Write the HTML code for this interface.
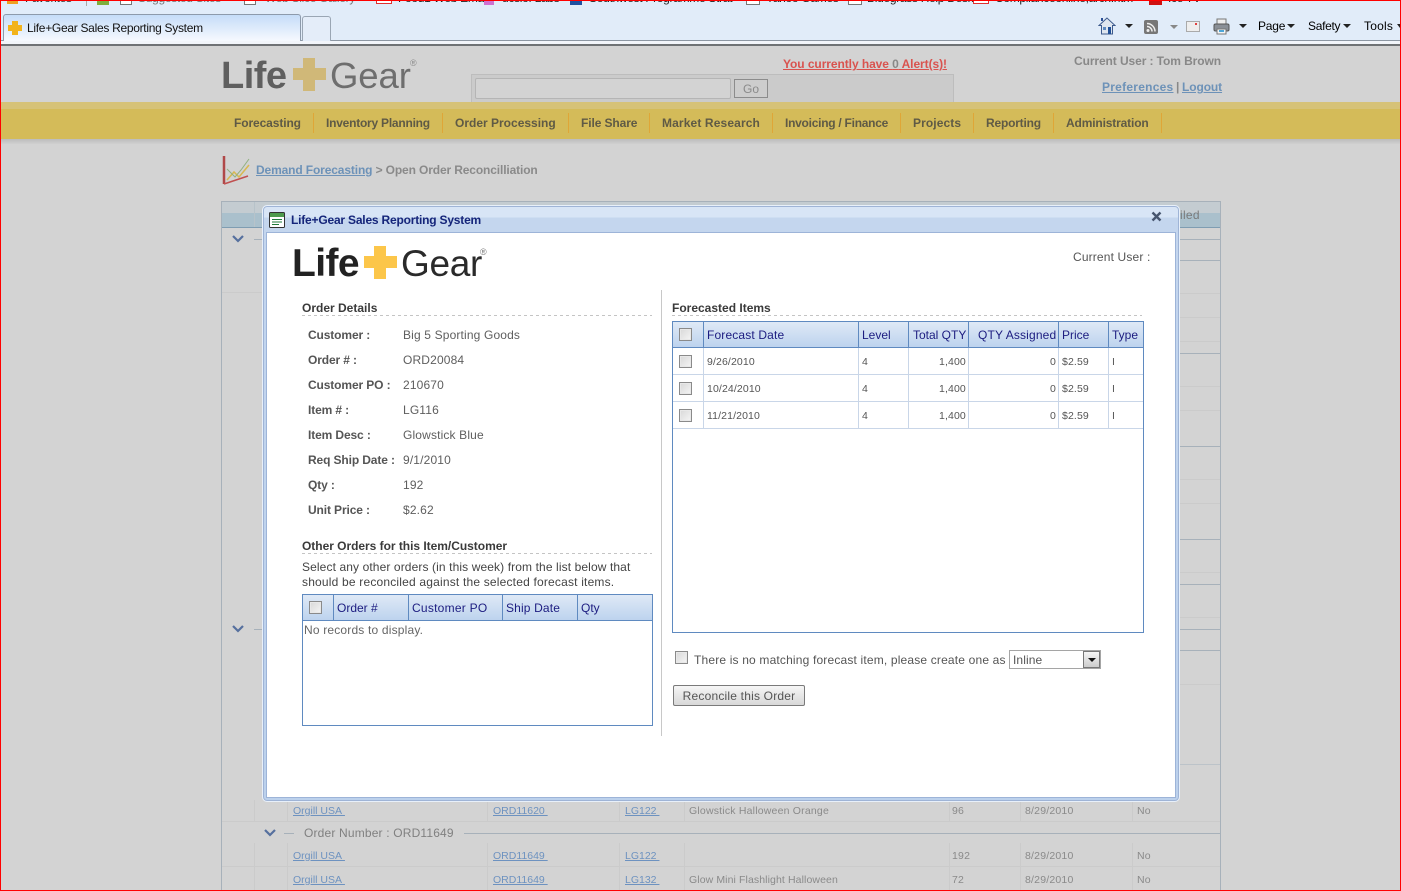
<!DOCTYPE html>
<html><head><meta charset="utf-8"><title>Life+Gear Sales Reporting System</title>
<style>
*{box-sizing:border-box}
html,body{margin:0;padding:0;width:1401px;height:891px;overflow:hidden;background:#d3d3d3}
body{position:relative;font:12px/14px "Liberation Sans",sans-serif;color:#666}
.a{position:absolute}
.t{position:absolute;white-space:nowrap;line-height:14px}
.b{font-weight:bold}
.u{text-decoration:underline}
.nav{position:absolute;top:116px;font-weight:bold;color:#5f5a45;white-space:nowrap;line-height:14px}
.sep{position:absolute;top:113px;width:1px;height:20px;background:#dfa637}
.bl{position:absolute;background:#a7b1ba}
.fl{position:absolute;background:#cbcbcb}
.lk{position:absolute;white-space:nowrap;line-height:14px;color:#6d92c0;font-size:10.5px;text-decoration:underline}
.bg{position:absolute;white-space:nowrap;line-height:14px;color:#8a8a8a;font-size:10.5px;letter-spacing:.2px}
.lab{position:absolute;left:308px;font-weight:bold;color:#555;white-space:nowrap;line-height:14px;letter-spacing:-.12px}
.val{position:absolute;left:403px;color:#5e5e5e;white-space:nowrap;line-height:14px;letter-spacing:.15px}
.h{position:absolute;font-weight:bold;color:#3a3a3a;white-space:nowrap;line-height:14px}
.dash{position:absolute;height:1px;background:repeating-linear-gradient(90deg,#c4c4c4 0 3px,transparent 3px 6px)}
.th{position:absolute;height:26px;background:linear-gradient(#dfe9f6,#bdd3ee);border-top:1px solid #5f8ac0;border-bottom:1px solid #5f8ac0}
.thd{position:absolute;width:1px;background:#5f8ac0}
.tht{position:absolute;color:#1c1c80;white-space:nowrap;line-height:14px;letter-spacing:.15px}
.td{position:absolute;color:#555;font-size:10.5px;white-space:nowrap;line-height:14px;letter-spacing:.12px}
.cb{position:absolute;width:13px;height:13px;border:1px solid #8a8a8a;background:linear-gradient(135deg,#d8d8d8,#f5f5f5);box-shadow:inset 0 0 0 1px #e8e8e8}
.rowl{position:absolute;left:673px;width:470px;height:1px;background:#c9d6e8}
.cold{position:absolute;width:1px;top:348px;height:81px;background:#c9d6e8}
.top{position:absolute;top:19px;color:#000;white-space:nowrap;line-height:14px;font-size:12px}
.fav{position:absolute;top:-9px;white-space:nowrap;line-height:14px;letter-spacing:-.3px}
</style></head><body>

<!-- browser chrome -->
<div class="a" style="left:0;top:0;width:1401px;height:46px;background:#e1ecf9"></div>
<div class="a" style="left:0;top:40px;width:1401px;height:1px;background:#8d97a3"></div>
<div class="a" style="left:0;top:41px;width:1401px;height:3px;background:#f2f5fa"></div>
<div class="a" style="left:0;top:44px;width:1401px;height:2px;background:#6f7275"></div>
<div class="fav" style="left:25px;color:#333">Favorites</div>
<div class="a" style="left:7px;top:0;width:11px;height:4px;background:#f0a020"></div>
<div class="a" style="left:86px;top:0;width:1px;height:6px;background:#a8a8a8"></div>
<div class="a" style="left:97px;top:0;width:12px;height:5px;background:#7fae3c"></div>
<div class="a" style="left:120px;top:0;width:12px;height:5px;background:#fff;border:1px solid #777"></div>
<div class="fav" style="left:138px;color:#777">Suggested Sites</div>
<div class="a" style="left:244px;top:0;width:12px;height:5px;background:#fff;border:1px solid #777"></div>
<div class="fav" style="left:265px;color:#777">Web Slice Gallery</div>
<div class="a" style="left:376px;top:0;width:16px;height:4px;background:#fff;border:1px solid #e03030"></div>
<div class="fav" style="left:398px;color:#222">Food1 Web Email</div>
<div class="a" style="left:484px;top:0;width:10px;height:5px;background:#d070d0"></div>
<div class="fav" style="left:502px;color:#222">ucsiof Labs</div>
<div class="a" style="left:570px;top:0;width:12px;height:5px;background:#2050a0"></div>
<div class="fav" style="left:589px;color:#222">Southwest Programme Strat</div>
<div class="a" style="left:746px;top:0;width:14px;height:5px;background:#fff;border:1px solid #777"></div>
<div class="fav" style="left:766px;color:#222">Yahoo Games</div>
<div class="a" style="left:848px;top:0;width:14px;height:5px;background:#fff;border:1px solid #777"></div>
<div class="fav" style="left:867px;color:#222">Bluegrass Help Desk</div>
<div class="a" style="left:973px;top:0;width:16px;height:4px;background:#fff;border:1px solid #e03030"></div>
<div class="fav" style="left:995px;color:#222">Complianceonline,arch.htm</div>
<div class="a" style="left:1149px;top:0;width:13px;height:5px;background:#d01010"></div>
<div class="fav" style="left:1168px;color:#222">Ice TV</div>

<!-- tabs -->
<div class="a" style="left:3px;top:14px;width:298px;height:27px;border:1px solid #8d9aab;border-bottom:0;border-radius:3px 3px 0 0;background:linear-gradient(#c5dcf8,#f6f9fe)"></div>
<svg class="a" style="left:8px;top:21px" width="14" height="14"><path d="M4 0h6v4h4v6h-4v4H4v-4H0V4h4z" fill="#f2b31c"/></svg>
<div class="t" style="left:27px;top:21px;color:#111;font-size:12px;letter-spacing:-.29px">Life+Gear Sales Reporting System</div>
<div class="a" style="left:302px;top:16px;width:29px;height:25px;border:1px solid #9aa6b4;border-bottom:0;border-radius:3px 3px 0 0;background:#e4edf9"></div>

<!-- toolbar right -->
<svg class="a" style="left:1098px;top:17px" width="18" height="18"><path d="M9 1 1 8.5h2.5V17h11V8.5H17z" fill="#dfe6ef" stroke="#3d5a8c"/><rect x="5" y="10" width="3" height="3" fill="#5f8ac0"/><rect x="10" y="10" width="3" height="7" fill="#1f4f96"/><path d="M3 1h2v3H3z" fill="#2b4f96"/></svg>
<div class="a" style="left:1125px;top:24px;border:4px solid transparent;border-top:4px solid #222"></div>
<div class="a" style="left:1144px;top:20px;width:14px;height:14px;background:#777;border-radius:2px"></div>
<svg class="a" style="left:1144px;top:20px" width="14" height="14"><circle cx="4" cy="10.500" r="1.500" fill="#eee"/><path d="M3 6.500a5 5 0 0 1 5 5M3 3.500a8 8 0 0 1 8 8" stroke="#eee" stroke-width="1.500" fill="none"/></svg>
<div class="a" style="left:1170px;top:25px;border:4px solid transparent;border-top:4px solid #888"></div>
<div class="a" style="left:1186px;top:21px;width:14px;height:11px;background:#eee;border:1px solid #aaa"></div>
<div class="a" style="left:1195px;top:23px;width:2px;height:2px;background:#e04040"></div>
<svg class="a" style="left:1213px;top:18px" width="17" height="17"><rect x="4" y="1" width="9" height="5" fill="#eee" stroke="#777"/><rect x="1" y="6" width="15" height="7" rx="1.500" fill="#8a8f96" stroke="#555"/><rect x="4" y="11" width="9" height="5" fill="#f4f4f4" stroke="#777"/><rect x="6" y="12" width="5" height="2" fill="#4da6d8"/></svg>
<div class="a" style="left:1239px;top:24px;border:4px solid transparent;border-top:4px solid #222"></div>
<div class="top" style="left:1258px;letter-spacing:-.2px">Page</div>
<div class="a" style="left:1287px;top:24px;border:4px solid transparent;border-top:4px solid #222"></div>
<div class="top" style="left:1308px;letter-spacing:-.3px">Safety</div>
<div class="a" style="left:1343px;top:24px;border:4px solid transparent;border-top:4px solid #222"></div>
<div class="top" style="left:1364px;letter-spacing:.2px">Tools</div>
<div class="a" style="left:1397px;top:24px;border:3px solid transparent;border-top:4px solid #222"></div>

<!-- page header -->
<div class="a" style="left:0;top:46px;width:1401px;height:845px;background:#d3d3d3"></div>
<div class="t b" style="left:221px;top:53px;font-size:38px;line-height:46px;color:#5f5f5f;letter-spacing:-.5px">Life</div>
<svg class="a" style="left:293px;top:58px" width="33" height="33"><path d="M10 0h12v10h11v12H22v11H10V22H0V10h10z" fill="#d0b878"/></svg>
<div class="t" style="left:330px;top:53px;font-size:36.5px;line-height:46px;color:#6e6e6e;letter-spacing:-.1px">Gear</div>
<div class="t" style="left:410px;top:59px;font-size:9px;line-height:9px;color:#8a8a8a">®</div>

<div class="t b u" style="left:783px;top:57px;color:#d9534f;letter-spacing:-.07px">You currently have <span style="color:#888">0</span> Alert(s)!</div>
<div class="t b" style="left:1074px;top:54px;color:#888;letter-spacing:-.09px">Current User : Tom Brown</div>
<div class="t b u" style="left:1102px;top:80px;color:#6d92b8;letter-spacing:.25px">Preferences</div>
<div class="t b" style="left:1176px;top:80px;color:#888">|</div>
<div class="t b u" style="left:1182px;top:80px;color:#6d92b8;letter-spacing:-.1px">Logout</div>

<div class="a" style="left:471px;top:74px;width:483px;height:30px;background:#cbcbcb;border:1px solid #bdbdbd;border-bottom:0"></div>
<div class="a" style="left:475px;top:78px;width:256px;height:21px;background:#d3d3d3;border:1px solid #b5b5b5;border-radius:2px"></div>
<div class="a" style="left:734px;top:79px;width:34px;height:19px;background:#cdcdcd;border:1px solid #8c8c8c;text-align:center;line-height:18px;color:#8a8a8a">Go</div>

<!-- nav bar -->
<div class="a" style="left:0;top:102px;width:1401px;height:7px;background:#d6c278"></div>
<div class="a" style="left:0;top:109px;width:1401px;height:30px;background:#d4bb59"></div>
<div class="a" style="left:0;top:139px;width:1401px;height:5px;background:linear-gradient(#bcbcbc,#d0d0d0)"></div>
<div class="nav" style="left:234px;letter-spacing:-.1px">Forecasting</div><div class="sep" style="left:313px"></div>
<div class="nav" style="left:326px;letter-spacing:-.23px">Inventory Planning</div><div class="sep" style="left:442px"></div>
<div class="nav" style="left:455px">Order Processing</div><div class="sep" style="left:568px"></div>
<div class="nav" style="left:581px;letter-spacing:-.1px">File Share</div><div class="sep" style="left:649px"></div>
<div class="nav" style="left:662px;letter-spacing:.13px">Market Research</div><div class="sep" style="left:772px"></div>
<div class="nav" style="left:785px;letter-spacing:-.26px">Invoicing / Finance</div><div class="sep" style="left:900px"></div>
<div class="nav" style="left:913px;letter-spacing:.1px">Projects</div><div class="sep" style="left:973px"></div>
<div class="nav" style="left:986px;letter-spacing:-.2px">Reporting</div><div class="sep" style="left:1053px"></div>
<div class="nav" style="left:1066px;letter-spacing:-.15px">Administration</div><div class="sep" style="left:1161px"></div>

<!-- breadcrumb -->
<svg class="a" style="left:222px;top:155px" width="30" height="30"><path d="M2 1v28" stroke="#b04848" stroke-width="2.500" fill="none"/><path d="M2 29 26 21" stroke="#c05050" stroke-width="1.500" fill="none"/><path d="M5 25l7-8 5 5 10-12" stroke="#d8b850" stroke-width="1.500" fill="none"/><path d="M5 14l8 8 6-7 8-11" stroke="#90b080" fill="none"/></svg>
<div class="t b" style="left:256px;top:163px;color:#8a8a8a;letter-spacing:-.13px"><span class="u" style="color:#6d92b8">Demand Forecasting</span> &gt; Open Order Reconcilliation</div>

<!-- background grid -->
<div class="a" style="left:221px;top:201px;width:1000px;height:690px;border:1px solid #a7b1ba;border-bottom:0"></div>
<div class="a" style="left:222px;top:202px;width:998px;height:11px;background:#c4ccd1"></div>
<div class="a" style="left:222px;top:213px;width:998px;height:14px;background:#aac0cc"></div>
<div class="a" style="left:222px;top:227px;width:998px;height:1px;background:#7f9db2"></div>
<div class="a" style="left:254px;top:202px;width:1px;height:25px;background:#b7c3ca"></div>
<div class="t" style="left:1180px;top:208px;color:#7a7a7a;letter-spacing:.3px">iled</div>
<svg class="a" style="left:232px;top:235px" width="12" height="8"><path d="M1 1l5 5 5-5" stroke="#56709e" stroke-width="2.200" fill="none"/></svg>
<svg class="a" style="left:232px;top:625px" width="12" height="8"><path d="M1 1l5 5 5-5" stroke="#56709e" stroke-width="2.200" fill="none"/></svg>
<div class="bl" style="left:254px;top:239px;width:966px;height:1px"></div>
<div class="bl" style="left:254px;top:629px;width:966px;height:1px"></div>
<div class="bl" style="left:1180px;top:260px;width:40px;height:1px"></div>
<div class="bl" style="left:1180px;top:353px;width:40px;height:1px"></div>
<div class="bl" style="left:1180px;top:446px;width:40px;height:1px"></div>
<div class="bl" style="left:1180px;top:539px;width:40px;height:1px"></div>
<div class="bl" style="left:1180px;top:584px;width:40px;height:1px"></div>
<div class="bl" style="left:1180px;top:650px;width:40px;height:1px"></div>
<div class="bl" style="left:1180px;top:764px;width:40px;height:1px;background:#bcc3c9"></div>
<div class="fl" style="left:222px;top:292px;width:40px;height:1px"></div>
<div class="fl" style="left:1180px;top:293px;width:40px;height:1px"></div>
<div class="fl" style="left:1180px;top:317px;width:40px;height:1px"></div>
<div class="fl" style="left:1180px;top:341px;width:40px;height:1px"></div>
<div class="fl" style="left:1180px;top:386px;width:40px;height:1px"></div>
<div class="fl" style="left:1180px;top:410px;width:40px;height:1px"></div>
<div class="fl" style="left:1180px;top:479px;width:40px;height:1px"></div>
<div class="fl" style="left:1180px;top:503px;width:40px;height:1px"></div>
<div class="fl" style="left:1180px;top:572px;width:40px;height:1px"></div>
<div class="fl" style="left:1180px;top:617px;width:40px;height:1px"></div>
<div class="fl" style="left:1180px;top:684px;width:40px;height:1px"></div>

<div class="fl" style="left:222px;top:821px;width:998px;height:1px"></div>
<div class="fl" style="left:222px;top:866px;width:998px;height:1px"></div>
<div class="fl" style="left:254px;top:800px;width:1px;height:21px"></div>
<div class="fl" style="left:287px;top:800px;width:1px;height:21px"></div>
<div class="fl" style="left:254px;top:843px;width:1px;height:48px"></div>
<div class="fl" style="left:287px;top:843px;width:1px;height:48px"></div>
<div class="fl" style="left:487px;top:800px;width:1px;height:21px"></div>
<div class="fl" style="left:487px;top:843px;width:1px;height:48px"></div>
<div class="fl" style="left:619px;top:800px;width:1px;height:21px"></div>
<div class="fl" style="left:619px;top:843px;width:1px;height:48px"></div>
<div class="fl" style="left:684px;top:800px;width:1px;height:21px"></div>
<div class="fl" style="left:684px;top:843px;width:1px;height:48px"></div>
<div class="fl" style="left:949px;top:800px;width:1px;height:21px"></div>
<div class="fl" style="left:949px;top:843px;width:1px;height:48px"></div>
<div class="fl" style="left:1020px;top:800px;width:1px;height:21px"></div>
<div class="fl" style="left:1020px;top:843px;width:1px;height:48px"></div>
<div class="fl" style="left:1132px;top:800px;width:1px;height:21px"></div>
<div class="fl" style="left:1132px;top:843px;width:1px;height:48px"></div>

<div class="lk" style="left:293px;top:804px">Orgill USA&nbsp;</div><div class="lk" style="left:493px;top:804px">ORD11620&nbsp;</div><div class="lk" style="left:625px;top:804px">LG122&nbsp;</div>
<div class="bg" style="left:689px;top:804px">Glowstick Halloween Orange</div><div class="bg" style="left:952px;top:804px">96</div><div class="bg" style="left:1025px;top:804px">8/29/2010</div><div class="bg" style="left:1137px;top:804px">No</div>

<svg class="a" style="left:264px;top:829px" width="12" height="8"><path d="M1 1l5 5 5-5" stroke="#56709e" stroke-width="2.200" fill="none"/></svg>
<div class="a" style="left:284px;top:833px;width:10px;height:1px;background:#a7b1ba"></div>
<div class="t" style="left:304px;top:826px;color:#808080;letter-spacing:.17px">Order Number : ORD11649</div>
<div class="bl" style="left:464px;top:833px;width:756px;height:1px"></div>

<div class="lk" style="left:293px;top:849px">Orgill USA&nbsp;</div><div class="lk" style="left:493px;top:849px">ORD11649&nbsp;</div><div class="lk" style="left:625px;top:849px">LG122&nbsp;</div>
<div class="bg" style="left:952px;top:849px">192</div><div class="bg" style="left:1025px;top:849px">8/29/2010</div><div class="bg" style="left:1137px;top:849px">No</div>
<div class="lk" style="left:293px;top:873px">Orgill USA&nbsp;</div><div class="lk" style="left:493px;top:873px">ORD11649&nbsp;</div><div class="lk" style="left:625px;top:873px">LG132&nbsp;</div>
<div class="bg" style="left:689px;top:873px;letter-spacing:.1px">Glow Mini Flashlight Halloween</div><div class="bg" style="left:952px;top:873px">72</div><div class="bg" style="left:1025px;top:873px">8/29/2010</div><div class="bg" style="left:1137px;top:873px">No</div>

<!-- modal -->
<div class="a" style="left:262px;top:205px;width:918px;height:597px;border:1px solid #e8f0fa;border-radius:5px;background:linear-gradient(#d8e5f6 0,#d8e5f6 11px,#c4d6ee 12px,#bcd1ec 100%);box-shadow:0 0 0 1px #9fb4d6 inset"></div>
<div class="a" style="left:266px;top:232px;width:910px;height:566px;border:1px solid #9db4d8;background:#fff"></div>
<svg class="a" style="left:269px;top:212px" width="17" height="17"><rect x=".5" y=".5" width="15" height="15" rx="1" fill="#fff" stroke="#333"/><rect x="1" y="1" width="14" height="4" fill="#4d9a4d"/><path d="M3 7.500h10M3 10h10M3 12.500h7" stroke="#1f7a3a"/></svg>
<div class="t b" style="left:291px;top:213px;color:#15257a;font-size:12px;letter-spacing:-.2px">Life+Gear Sales Reporting System</div>
<svg class="a" style="left:1151px;top:211px" width="11" height="11"><path d="M1.500 1.500l8 8M9.500 1.500l-8 8" stroke="#47566f" stroke-width="2.400"/></svg>

<div class="t b" style="left:292px;top:241px;font-size:39px;line-height:46px;color:#222;letter-spacing:-.6px">Life</div>
<svg class="a" style="left:364px;top:246px" width="33" height="33"><path d="M10 0h12v10h11v12H22v11H10V22H0V10h10z" fill="#fcc64a"/></svg>
<div class="t" style="left:401px;top:241px;font-size:37px;line-height:46px;color:#2a2a2a;letter-spacing:-.3px">Gear</div>
<div class="t" style="left:480px;top:248px;font-size:9px;line-height:9px;color:#777">®</div>
<div class="t" style="left:1073px;top:250px;color:#555;letter-spacing:.15px">Current User :</div>

<!-- divider -->
<div class="a" style="left:661px;top:290px;width:1px;height:446px;background:#c8c8c8"></div>

<!-- order details -->
<div class="h" style="left:302px;top:301px">Order Details</div>
<div class="dash" style="left:302px;top:315px;width:350px"></div>
<div class="lab" style="top:328px">Customer :</div><div class="val" style="top:328px">Big 5 Sporting Goods</div>
<div class="lab" style="top:353px">Order # :</div><div class="val" style="top:353px">ORD20084</div>
<div class="lab" style="top:378px">Customer PO :</div><div class="val" style="top:378px">210670</div>
<div class="lab" style="top:403px">Item # :</div><div class="val" style="top:403px">LG116</div>
<div class="lab" style="top:428px">Item Desc :</div><div class="val" style="top:428px">Glowstick Blue</div>
<div class="lab" style="top:453px">Req Ship Date :</div><div class="val" style="top:453px">9/1/2010</div>
<div class="lab" style="top:478px">Qty :</div><div class="val" style="top:478px">192</div>
<div class="lab" style="top:503px">Unit Price :</div><div class="val" style="top:503px">$2.62</div>

<div class="h" style="left:302px;top:539px;letter-spacing:-.03px">Other Orders for this Item/Customer</div>
<div class="dash" style="left:302px;top:553px;width:350px"></div>
<div class="t" style="left:302px;top:560px;color:#444;letter-spacing:.11px">Select any other orders (in this week) from the list below that</div>
<div class="t" style="left:302px;top:575px;color:#444;letter-spacing:.19px">should be reconciled against the selected forecast items.</div>

<div class="a" style="left:302px;top:594px;width:351px;height:132px;border:1px solid #5f8ac0;background:#fff"></div>
<div class="th" style="left:302px;top:594px;width:351px;height:27px;border-left:1px solid #5f8ac0;border-right:1px solid #5f8ac0"></div>
<div class="thd" style="left:333px;top:595px;height:25px"></div>
<div class="thd" style="left:408px;top:595px;height:25px"></div>
<div class="thd" style="left:502px;top:595px;height:25px"></div>
<div class="thd" style="left:577px;top:595px;height:25px"></div>
<div class="cb" style="left:309px;top:601px"></div>
<div class="tht" style="left:337px;top:601px;letter-spacing:0">Order #</div>
<div class="tht" style="left:412px;top:601px;letter-spacing:.25px">Customer PO</div>
<div class="tht" style="left:506px;top:601px">Ship Date</div>
<div class="tht" style="left:581px;top:601px;letter-spacing:0">Qty</div>
<div class="t" style="left:304px;top:623px;color:#666;letter-spacing:.18px">No records to display.</div>

<!-- forecasted items -->
<div class="h" style="left:672px;top:301px">Forecasted Items</div>
<div class="dash" style="left:672px;top:315px;width:470px"></div>
<div class="a" style="left:672px;top:321px;width:472px;height:312px;border:1px solid #5f8ac0;background:#fff"></div>
<div class="th" style="left:672px;top:321px;width:472px;height:27px;border-left:1px solid #5f8ac0;border-right:1px solid #5f8ac0"></div>
<div class="thd" style="left:703px;top:322px;height:25px"></div>
<div class="thd" style="left:858px;top:322px;height:25px"></div>
<div class="thd" style="left:908px;top:322px;height:25px"></div>
<div class="thd" style="left:968px;top:322px;height:25px"></div>
<div class="thd" style="left:1058px;top:322px;height:25px"></div>
<div class="thd" style="left:1108px;top:322px;height:25px"></div>
<div class="cb" style="left:679px;top:328px"></div>
<div class="tht" style="left:707px;top:328px">Forecast Date</div>
<div class="tht" style="left:862px;top:328px;letter-spacing:0">Level</div>
<div class="tht" style="left:913px;top:328px;letter-spacing:0">Total QTY</div>
<div class="tht" style="left:978px;top:328px">QTY Assigned</div>
<div class="tht" style="left:1062px;top:328px;letter-spacing:0">Price</div>
<div class="tht" style="left:1112px;top:328px;letter-spacing:0">Type</div>

<div class="cold" style="left:703px"></div><div class="cold" style="left:858px"></div><div class="cold" style="left:908px"></div><div class="cold" style="left:968px"></div><div class="cold" style="left:1058px"></div><div class="cold" style="left:1108px"></div>
<div class="rowl" style="top:374px"></div><div class="rowl" style="top:401px"></div><div class="rowl" style="top:428px"></div>

<div class="cb" style="left:679px;top:355px"></div>
<div class="td" style="left:707px;top:355px">9/26/2010</div><div class="td" style="left:862px;top:355px">4</div><div class="td" style="left:939px;top:355px">1,400</div><div class="td" style="left:1050px;top:355px">0</div><div class="td" style="left:1062px;top:355px">$2.59</div><div class="td" style="left:1112px;top:355px">I</div>
<div class="cb" style="left:679px;top:382px"></div>
<div class="td" style="left:707px;top:382px">10/24/2010</div><div class="td" style="left:862px;top:382px">4</div><div class="td" style="left:939px;top:382px">1,400</div><div class="td" style="left:1050px;top:382px">0</div><div class="td" style="left:1062px;top:382px">$2.59</div><div class="td" style="left:1112px;top:382px">I</div>
<div class="cb" style="left:679px;top:409px"></div>
<div class="td" style="left:707px;top:409px">11/21/2010</div><div class="td" style="left:862px;top:409px">4</div><div class="td" style="left:939px;top:409px">1,400</div><div class="td" style="left:1050px;top:409px">0</div><div class="td" style="left:1062px;top:409px">$2.59</div><div class="td" style="left:1112px;top:409px">I</div>

<div class="cb" style="left:675px;top:651px"></div>
<div class="t" style="left:694px;top:653px;color:#555;letter-spacing:.17px">There is no matching forecast item, please create one as</div>
<div class="a" style="left:1009px;top:650px;width:92px;height:19px;border:1px solid #a5a5a5;background:#fff"></div>
<div class="t" style="left:1013px;top:653px;color:#555;letter-spacing:.1px">Inline</div>
<div class="a" style="left:1083px;top:651px;width:17px;height:17px;background:linear-gradient(#f5f5f5,#ccc);border:1px solid #777"></div>
<div class="a" style="left:1088px;top:658px;border:4px solid transparent;border-top:4px solid #111"></div>

<div class="a" style="left:673px;top:685px;width:132px;height:21px;border:1px solid #7a7a7a;border-radius:2px;background:linear-gradient(#f6f6f6,#d8d8d8);text-align:center;line-height:20px;color:#555;letter-spacing:.2px">Reconcile this Order</div>

<!-- red frame -->
<div class="a" style="left:0;top:0;width:1401px;height:1px;background:#f00"></div>
<div class="a" style="left:0;top:890px;width:1401px;height:1px;background:#f00"></div>
<div class="a" style="left:0;top:0;width:1px;height:891px;background:#f00"></div>
<div class="a" style="left:1400px;top:0;width:1px;height:891px;background:#f00"></div>
</body></html>
